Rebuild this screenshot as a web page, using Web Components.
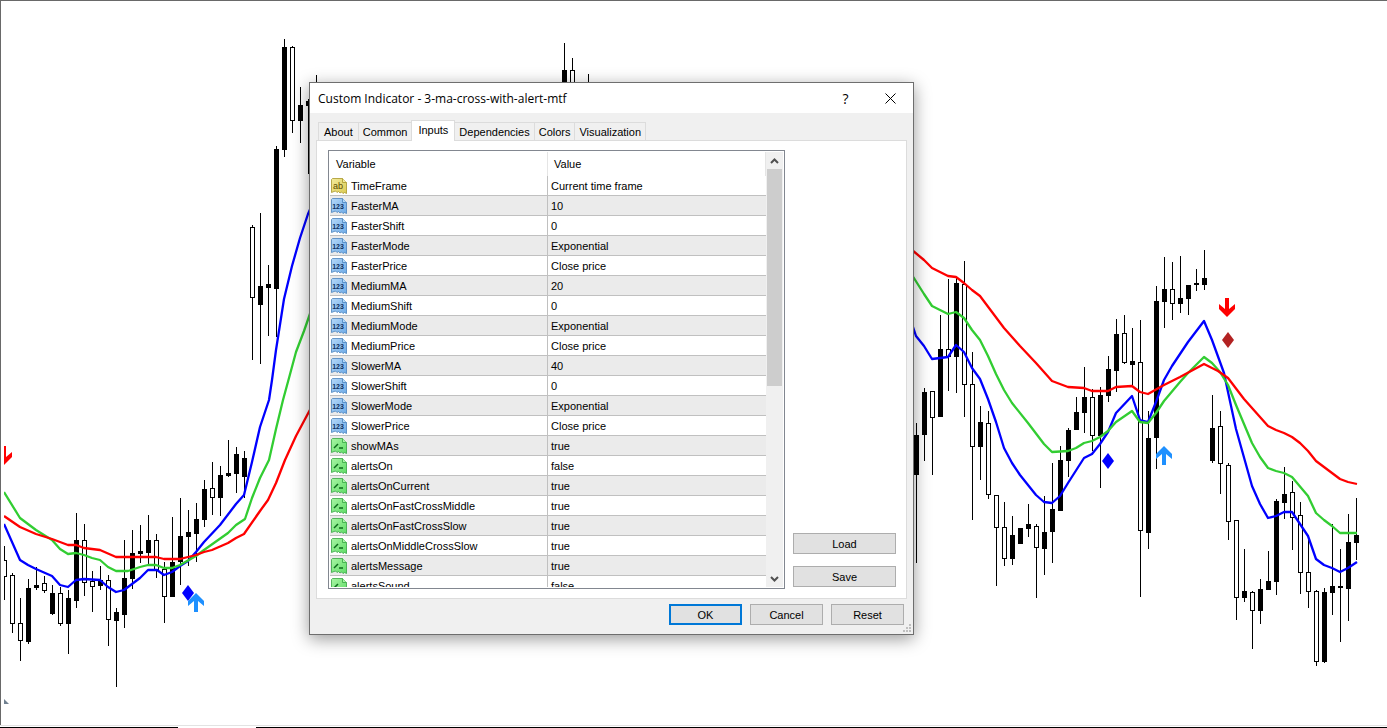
<!DOCTYPE html>
<html lang="en">
<head>
<meta charset="utf-8">
<title>Custom Indicator</title>
<style>
    body{
        margin: 0;
        min-height: 100vh;
        overflow: hidden;
        background: #fff;
        color: #000;
        font: 11px "Liberation Sans", Arial, sans-serif;
    }
</style>
</head>
<body>

<price-chart></price-chart>

<dialog-window caption="Custom Indicator - 3-ma-cross-with-alert-mtf">
    <tab-strip slot="tabs" tabs="About,Common,Inputs,Dependencies,Colors,Visualization" active="Inputs"></tab-strip>
    <inputs-table></inputs-table>
    <push-button slot="side">Load</push-button>
    <push-button slot="side">Save</push-button>
    <push-button slot="footer" primary>OK</push-button>
    <push-button slot="footer">Cancel</push-button>
    <push-button slot="footer">Reset</push-button>
</dialog-window>

<script>
// one candle every 8px: x, high, top, bottom, low, 1 = filled
const CANDLES = [
    [4,546,560,577,600,0],[12,573,575,624,633,0],[20,598,623,641,661,0],[28,579,588,642,644,1],
    [36,567,585,588,590,1],[44,576,583,591,593,0],[52,585,593,614,615,1],[60,587,593,624,626,0],
    [68,590,598,624,654,1],[76,513,540,601,608,1],[84,524,540,583,596,0],[92,571,581,587,612,0],
    [100,566,580,586,590,1],[108,575,580,620,646,0],[116,608,612,621,687,1],[124,540,578,615,628,1],
    [132,530,553,579,589,1],[140,525,551,554,563,1],[148,515,540,553,565,1],[156,534,540,570,578,0],
    [164,562,569,597,623,0],[172,517,562,597,597,1],[180,498,536,562,585,1],[188,510,532,537,566,1],
    [196,503,519,534,562,1],[204,480,489,520,527,1],[212,462,488,498,515,0],[220,466,475,498,516,1],
    [228,440,473,476,477,1],[236,447,454,474,493,1],[244,451,458,477,498,1],[252,225,227,298,360,0],
    [260,213,286,305,364,1],[268,265,284,288,336,1],[276,146,149,289,337,1],[284,39,47,150,157,1],
    [292,46,47,121,133,0],[300,87,105,121,143,1],[308,99,101,106,174,1],[316,75,90,100,110,1],
    [564,43,70,120,130,1],[572,58,70,120,130,0],[588,74,90,120,130,1],
    [916,423,435,475,563,1],[924,388,392,435,461,1],[932,391,391,418,475,0],[940,315,349,417,417,1],
    [948,279,349,357,391,0],[956,278,283,357,393,1],[964,261,284,385,417,0],[972,352,384,447,520,0],
    [980,406,422,447,480,1],[988,411,423,495,499,0],[996,495,495,528,586,0],[1004,502,527,559,566,0],
    [1012,516,535,559,565,1],[1020,528,528,544,544,1],[1028,504,524,529,537,1],[1036,524,526,548,598,0],
    [1044,496,532,549,575,1],[1052,463,509,532,563,1],[1060,446,460,511,511,1],[1068,428,430,461,477,1],
    [1076,397,412,430,430,1],[1084,367,397,413,433,1],[1092,389,397,436,451,0],[1100,387,395,436,488,1],
    [1108,356,369,396,402,1],[1116,319,334,371,392,1],[1124,315,333,363,364,0],[1132,328,361,365,385,1],
    [1140,320,362,531,597,0],[1148,411,438,533,549,1],[1156,286,301,438,469,1],[1164,257,289,302,328,1],
    [1172,262,289,304,320,0],[1180,256,298,304,313,1],[1188,285,285,299,315,1],[1196,269,283,285,291,1],
    [1204,250,278,285,290,1],[1212,395,428,461,463,1],[1220,411,426,464,494,0],[1228,463,465,522,540,0],
    [1236,520,520,598,620,0],[1244,549,591,598,602,1],[1252,591,592,611,649,0],[1260,579,589,611,624,1],
    [1268,551,581,590,590,1],[1276,499,501,582,595,1],[1284,467,494,503,519,1],[1292,481,492,518,550,0],
    [1300,502,515,573,594,0],[1308,535,572,592,608,0],[1316,590,591,662,666,0],[1324,588,592,662,663,1],
    [1332,524,586,593,615,1],[1340,549,586,588,642,1],[1348,514,542,589,621,1],[1356,498,535,543,560,1]
];

const AVERAGES = [
    ['#0000ff', '4,524 20,560 28,565 36,569 52,576 60,585 68,587 76,580 84,579 100,580 108,587 116,592 124,590 132,584 140,578 148,570 157,570 164,575 172,572 180,566 188,561 196,552 204,542 220,525 236,504 244,495 252,462 260,427 269,400 272,380 276,350 284,299 292,266 300,238 308,214 312,205'],
    ['#0000ff', '912,324 916,336 924,346 932,359 940,358 948,357 956,345 964,352 972,368 980,379 988,399 996,422 1004,448 1012,463 1020,475 1036,495 1044,502 1052,503 1060,496 1068,483 1084,458 1092,454 1100,444 1108,432 1116,413 1132,396 1140,420 1148,422 1156,402 1164,380 1172,366 1188,342 1204,321 1212,340 1220,362 1224,373 1228,392 1236,429 1252,486 1260,504 1268,518 1276,516 1284,512 1292,512 1308,536 1316,559 1324,565 1332,568 1340,572 1348,568 1357,562'],
    ['#32cd32', '4,492 20,518 36,530 52,540 60,549 68,554 76,553 84,555 92,558 100,560 108,567 116,571 128,571 140,567 148,565 156,565 164,568 172,568 180,565 196,556 204,550 228,533 236,525 245,519 252,498 260,478 269,460 276,429 283,400 289,378 296,352 304,331 312,308'],
    ['#32cd32', '912,275 924,294 932,306 948,314 956,312 964,318 972,330 980,340 988,356 996,374 1004,390 1012,403 1028,423 1044,444 1052,452 1068,451 1076,448 1084,443 1092,441 1100,437 1108,431 1116,422 1132,411 1140,422 1148,423 1156,413 1164,401 1180,382 1188,373 1196,365 1204,357 1212,363 1220,372 1228,385 1236,405 1252,443 1260,457 1268,468 1276,471 1284,473 1292,477 1308,496 1316,513 1324,520 1332,526 1340,533 1357,533'],
    ['#ff0000', '4,516 20,527 36,534 52,539 68,545 76,545 84,548 100,550 116,557 156,557 164,559 180,559 196,555 204,552 212,550 228,543 236,538 244,534 260,511 268,500 276,483 285,460 296,436 312,406'],
    ['#ff0000', '912,250 924,260 932,268 948,276 956,277 964,283 972,290 980,296 1004,328 1020,346 1036,363 1052,381 1060,384 1068,387 1084,388 1092,391 1108,391 1116,387 1132,386 1140,392 1148,394 1164,385 1180,377 1204,364 1218,371 1228,378 1244,399 1268,426 1276,430 1284,433 1292,437 1300,443 1308,451 1316,461 1332,473 1340,479 1348,482 1357,484']
];

const ARROW = 'M-2 0H2V11L8 6V11L0 19L-8 11V6L-2 11Z';
const DIAMOND = 'M0-8L6 0L0 8L-6 0Z';

class PriceChart extends HTMLElement{

    constructor(){
        super()
        this.attachShadow({mode: 'open'})
    }

    candle([x, high, top, bottom, low, filled]){
        const body = filled
            ? `<rect x="${x - 2}" y="${top}" width="5" height="${bottom - top}"/>`
            : `<rect x="${x - 1.5}" y="${top + 0.5}" width="4" height="${bottom - top - 1}" fill="#fff" stroke="#000"/>`;
        return `<rect x="${x}" y="${high}" width="1" height="${low - high}"/>${body}`;
    }

    connectedCallback(){
        const candles = CANDLES.map(c => this.candle(c)).join('');
        const lines = AVERAGES
        .map(([color, points]) => `<polyline points="${points}" stroke="${color}"/>`)
        .join('');

        this.shadowRoot.innerHTML = `<style>
            :host{
                display: block;
            }
            svg{
                display: block;
                width: 100%;
                height: auto;
            }
        </style>
        <svg viewBox="0 0 1387 728" role="img" aria-label="Price chart">
            <defs><clipPath id="plot"><rect x="4" y="1" width="1383" height="720"/></clipPath></defs>
            <g shape-rendering="crispEdges" clip-path="url(#plot)">${candles}</g>
            <g clip-path="url(#plot)">
                <g fill="none" stroke-width="2.3" stroke-linejoin="round">${lines}</g>
                <path d="${ARROW}" transform="translate(4 446)" fill="#ff0000"/>
                <path d="${ARROW}" transform="translate(1227 298)" fill="#ff0000"/>
                <path d="${DIAMOND}" transform="translate(188 593)" fill="#0000ff"/>
                <path d="${ARROW}" transform="translate(196 612) scale(1 -1)" fill="#1e90ff"/>
                <path d="${ARROW}" transform="translate(1164 465) scale(1 -1)" fill="#1e90ff"/>
                <path d="${DIAMOND}" transform="translate(1108 461)" fill="#0000ff"/>
                <path d="${DIAMOND}" transform="translate(1228 340)" fill="#b22222"/>
                <path d="M4 699V704H9Z" fill="#708090"/>
            </g>
            <g shape-rendering="crispEdges">
                <rect width="1387" height="1" fill="#696969"/>
                <rect width="1" height="725" fill="#696969"/>
                <rect y="725" width="1387" height="1" fill="#e3e3e3"/>
                <rect y="727" width="178" height="1"/>
                <rect x="256" y="727" width="1131" height="1"/>
            </g>
        </svg>`
    }

}

class DialogWindow extends HTMLElement{

    constructor(){
        super()
        this.attachShadow({mode: 'open'})
    }

    connectedCallback(){
        this.shadowRoot.innerHTML = `<style>
            :host{
                position: absolute;
                left: 309px;
                top: 82px;
                width: 605px;
                box-sizing: border-box;
                border: 1px solid #6e6e6e;
                background: #f0f0f0;
                box-shadow: 0 4px 16px rgba(0, 0, 0, .4);
            }
            header{
                display: flex;
                align-items: center;
                height: 30px;
                padding-left: 8px;
                background: #fff;
            }
            h1{
                flex: 1;
                margin: 0;
                font: 12px "Open Sans", "Noto Sans", sans-serif;
            }
            header button{
                display: grid;
                place-items: center;
                width: 45px;
                height: 30px;
                padding: 0;
                border: 0;
                background: none;
                color: #000;
                font: 14px "Open Sans", "Noto Sans", sans-serif;
            }
            main{
                padding: 7px 6px 0;
            }
            .panel{
                display: flex;
                gap: 8px;
                padding: 9px 10px 9px 11px;
                border: 1px solid #dcdcdc;
                background: #fff;
            }
            .list{
                flex: 1;
                min-width: 0;
            }
            .side{
                display: flex;
                flex-direction: column;
                justify-content: flex-end;
                gap: 12px;
                width: 103px;
                padding-bottom: 2px;
            }
            footer{
                display: flex;
                justify-content: flex-end;
                gap: 8px;
                padding: 5px 9px 9px;
            }
            footer ::slotted(*){
                width: 73px;
            }
            .grip{
                position: absolute;
                right: 2px;
                bottom: 2px;
            }
        </style>
        <header>
            <h1></h1>
            <button type="button" aria-label="Help">?</button>
            <button type="button" aria-label="Close">
                <svg width="11" height="11" viewBox="0 0 11 11"><path d="M.5 .5L10.5 10.5M10.5 .5L.5 10.5" stroke="#000"/></svg>
            </button>
        </header>
        <main>
            <slot name="tabs"></slot>
            <div class="panel">
                <div class="list"><slot></slot></div>
                <div class="side"><slot name="side"></slot></div>
            </div>
        </main>
        <footer><slot name="footer"></slot></footer>
        <svg class="grip" width="8" height="8" fill="#bfbfbf"><path d="M6 0h2v2h-2zM3 3h2v2h-2zM6 3h2v2h-2zM0 6h2v2h-2zM3 6h2v2h-2zM6 6h2v2h-2z"/></svg>`

        this.shadowRoot.querySelector('h1').textContent = this.getAttribute('caption');
    }

}

class TabStrip extends HTMLElement{

    constructor(){
        super()
        this.attachShadow({mode: 'open'})
    }

    connectedCallback(){
        const active = this.getAttribute('active');
        const tabs = this.getAttribute('tabs').split(',')
        .map(t => `<button type="button" role="tab" aria-selected="${t === active}">${t}</button>`);

        this.shadowRoot.innerHTML = `<style>
            :host{
                display: block;
            }
            div{
                display: flex;
                align-items: flex-end;
                height: 20px;
                padding-left: 2px;
            }
            button{
                height: 18px;
                padding: 0 4px;
                border: 1px solid #dcdcdc;
                border-width: 1px 1px 0 0;
                background: #f0f0f0;
                color: #000;
                font: inherit;
            }
            button:first-child{
                padding: 0 5px;
                border-left-width: 1px;
            }
            button[aria-selected=true]{
                position: relative;
                height: 21px;
                margin: 0 0 -1px -1px;
                padding: 0 6px 3px;
                border-left-width: 1px;
                background: #fff;
            }
        </style>
        <div role="tablist">${tabs.join('')}</div>`
    }

}

class TypeIcon extends HTMLElement{

    constructor(){
        super()
        this.attachShadow({mode: 'open'})
    }

    connectedCallback(){
        const kinds = {
            text: ['#f3eb9c', '#dccb52', '#a8962a', '<text x="7" y="11" font-size="9" fill="#5a4a00">ab</text>'],
            number: ['#b4d8f8', '#6fabe6', '#4a82bd', '<text x="7" y="11" font-size="7" font-weight="bold" fill="#0d2f5e">123</text>'],
            flag: ['#a8f5a4', '#5edb66', '#36a544', '<path d="M3 10L7 6M8 10H12" stroke="#0d6b1c" stroke-width="1.5"/>']
        };
        const [light, dark, edge, mark] = kinds[this.getAttribute('kind')];

        this.shadowRoot.innerHTML = `<style>
            :host{
                display: block;
                width: 16px;
                height: 16px;
            }
            svg{
                display: block;
            }
            text{
                font-family: "Liberation Sans", Arial, sans-serif;
                text-anchor: middle;
            }
        </style>
        <svg width="16" height="16" viewBox="0 0 16 16">
            <linearGradient id="g" x2="1" y2="1"><stop stop-color="${light}"/><stop offset="1" stop-color="${dark}"/></linearGradient>
            <path d="M.5 1.5L1.5.5H11.5L15.5 4.5V15.5L13.5 14.5L12 15.5L10.5 14L9 15L7.5 13.5L6 14.5L4.5 13L3 13.5L.5 14.5Z" fill="url(#g)" stroke="${edge}" stroke-opacity=".8"/>
            <path d="M11.5 .5V4.5H15.5" fill="${light}" stroke="${edge}" stroke-opacity=".8"/>
            ${mark}
        </svg>`
    }

}

class InputsTable extends HTMLElement{

    constructor(){
        super()
        this.attachShadow({mode: 'open'})
        this.rows = [
            ['text', 'TimeFrame', 'Current time frame'],
            ['number', 'FasterMA', '10'],
            ['number', 'FasterShift', '0'],
            ['number', 'FasterMode', 'Exponential'],
            ['number', 'FasterPrice', 'Close price'],
            ['number', 'MediumMA', '20'],
            ['number', 'MediumShift', '0'],
            ['number', 'MediumMode', 'Exponential'],
            ['number', 'MediumPrice', 'Close price'],
            ['number', 'SlowerMA', '40'],
            ['number', 'SlowerShift', '0'],
            ['number', 'SlowerMode', 'Exponential'],
            ['number', 'SlowerPrice', 'Close price'],
            ['flag', 'showMAs', 'true'],
            ['flag', 'alertsOn', 'false'],
            ['flag', 'alertsOnCurrent', 'true'],
            ['flag', 'alertsOnFastCrossMiddle', 'true'],
            ['flag', 'alertsOnFastCrossSlow', 'true'],
            ['flag', 'alertsOnMiddleCrossSlow', 'true'],
            ['flag', 'alertsMessage', 'true'],
            ['flag', 'alertsSound', 'false']
        ];
    }

    connectedCallback(){
        const rows = this.rows
        .map(([kind, name, value]) => `<tr><td><div><type-icon kind="${kind}"></type-icon>${name}</div></td><td>${value}</td></tr>`)
        .join('');

        this.shadowRoot.innerHTML = `<style>
            :host{
                display: flex;
                box-sizing: border-box;
                height: 439px;
                padding: 1px;
                border: 1px solid #828790;
                background: #fff;
            }
            .view{
                flex: 1;
                overflow: hidden;
            }
            table{
                width: 100%;
                border-collapse: separate;
                border-spacing: 0;
                table-layout: fixed;
            }
            th{
                height: 24px;
                padding: 0 6px;
                border-right: 1px solid #e5e5e5;
                font-weight: normal;
                text-align: left;
            }
            td{
                height: 19px;
                padding: 0 3px;
                border-bottom: 1px solid #c0c0c0;
                white-space: nowrap;
            }
            th:first-child{
                width: 205px;
            }
            td:first-child{
                padding: 0 1px;
                border-right: 1px solid #c0c0c0;
            }
            tbody tr:nth-child(even){
                background: #ebebeb;
            }
            td div{
                display: flex;
                align-items: center;
                gap: 4px;
            }
        </style>
        <div class="view">
            <table>
                <thead><tr><th>Variable</th><th>Value</th></tr></thead>
                <tbody>${rows}</tbody>
            </table>
        </div>
        <scroll-bar></scroll-bar>`
    }

}

class ScrollBar extends HTMLElement{

    constructor(){
        super()
        this.attachShadow({mode: 'open'})
    }

    connectedCallback(){
        this.shadowRoot.innerHTML = `<style>
            :host{
                display: flex;
                flex-direction: column;
                width: 17px;
                background: #f0f0f0;
            }
            button{
                display: grid;
                place-items: center;
                height: 17px;
                padding: 0;
                border: 0;
                background: none;
            }
            .track{
                flex: 1;
                padding: 0 1px;
            }
            .thumb{
                height: 54%;
                background: #cdcdcd;
            }
            path{
                fill: none;
                stroke: #505050;
                stroke-width: 2;
            }
        </style>
        <button type="button" aria-label="Scroll up"><svg width="9" height="6"><path d="M1 5L4.5 1.5L8 5"/></svg></button>
        <div class="track"><div class="thumb"></div></div>
        <button type="button" aria-label="Scroll down"><svg width="9" height="6"><path d="M1 1L4.5 4.5L8 1"/></svg></button>`
    }

}

class PushButton extends HTMLElement{

    constructor(){
        super()
        this.attachShadow({mode: 'open'})
    }

    connectedCallback(){
        this.shadowRoot.innerHTML = `<style>
            :host{
                display: block;
            }
            button{
                display: block;
                width: 100%;
                height: 21px;
                padding: 0;
                border: 1px solid #adadad;
                background: #e1e1e1;
                color: #000;
                font: inherit;
            }
            :host([primary]) button{
                border: 2px solid #0078d7;
            }
        </style>
        <button type="button"><slot></slot></button>`
    }

}

customElements.define('price-chart', PriceChart)
customElements.define('dialog-window', DialogWindow)
customElements.define('tab-strip', TabStrip)
customElements.define('type-icon', TypeIcon)
customElements.define('inputs-table', InputsTable)
customElements.define('scroll-bar', ScrollBar)
customElements.define('push-button', PushButton)
</script>
</body>
</html>
